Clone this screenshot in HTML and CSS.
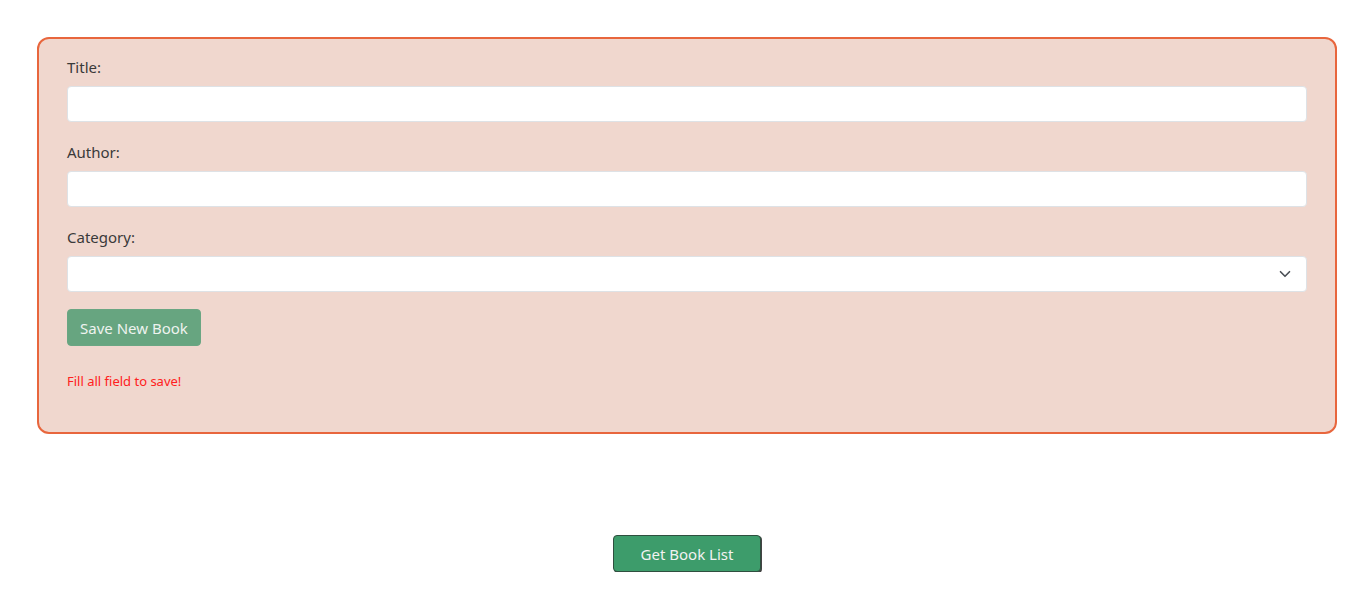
FILE: index.html
```html
<!DOCTYPE html>
<html>
<head>
<meta charset="utf-8">
<link rel="stylesheet" href="styles.css">
</head>
<body>
<div class="page">
  <form class="card">
    <div class="group">
      <label class="label">Title:</label>
      <input class="field" type="text">
    </div>
    <div class="group">
      <label class="label">Author:</label>
      <input class="field" type="text">
    </div>
    <div class="group">
      <label class="label">Category:</label>
      <div class="select">
        <svg class="chev" width="12" height="12" viewBox="0 0 16 16"><path d="M2 5l6 6 6-6" fill="none" stroke="#4a4f55" stroke-width="2.2" stroke-linecap="round" stroke-linejoin="round"/></svg>
      </div>
    </div>
    <button type="button" class="save">Save New Book</button>
    <p class="error">Fill all field to save!</p>
  </form>
  <div class="actions">
    <button type="button" class="list">Get Book List</button>
  </div>
</div>
</body>
</html>
```
FILE: styles.css
```css
* { box-sizing: border-box; }
body {
  margin: 0;
  background: #fff;
  font-family: "Noto Sans", "Open Sans", sans-serif;
  color: #333;
}
.page {
  width: 1300px;
  margin-left: 37px;
  padding-top: 37px;
}
.card {
  background: #f0d7ce;
  border: 2px solid #e8663d;
  border-radius: 12px;
  padding: 16px 28px 40px;
  display: flex;
  flex-direction: column;
  align-items: flex-start;
}
.group {
  width: 100%;
  margin-bottom: 18px;
  display: flex;
  flex-direction: column;
}
.group:nth-child(3) { margin-bottom: 17px; }
.label {
  font-size: 15px;
  line-height: 24px;
  margin-bottom: 7px;
  color: #3a3a3a;
}
.field, .select {
  width: 100%;
  height: 36px;
  border: 1px solid #dee2e6;
  border-radius: 4px;
  background: #fff;
  outline: none;
}
.select {
  display: flex;
  align-items: center;
  justify-content: flex-end;
  padding-right: 15px;
}
.save {
  height: 37px;
  padding: 0 12px;
  border: 1px solid #6aa683;
  border-radius: 4px;
  background: #67a580;
  color: #eef3ef;
  font-family: inherit;
  font-size: 15px;
}
.error {
  margin: 25px 0 0;
  font-size: 13px;
  line-height: 21px;
  color: #ff2020;
}
.actions {
  display: flex;
  justify-content: center;
  padding-top: 101px;
}
.list {
  width: 148px;
  height: 37px;
  border: 1px solid #2f4f3f;
  border-radius: 4px;
  background: #3d9c6b;
  color: #f2f2f2;
  font-family: inherit;
  font-size: 15px;
  box-shadow: 1px 1px 0 #444;
}
```
